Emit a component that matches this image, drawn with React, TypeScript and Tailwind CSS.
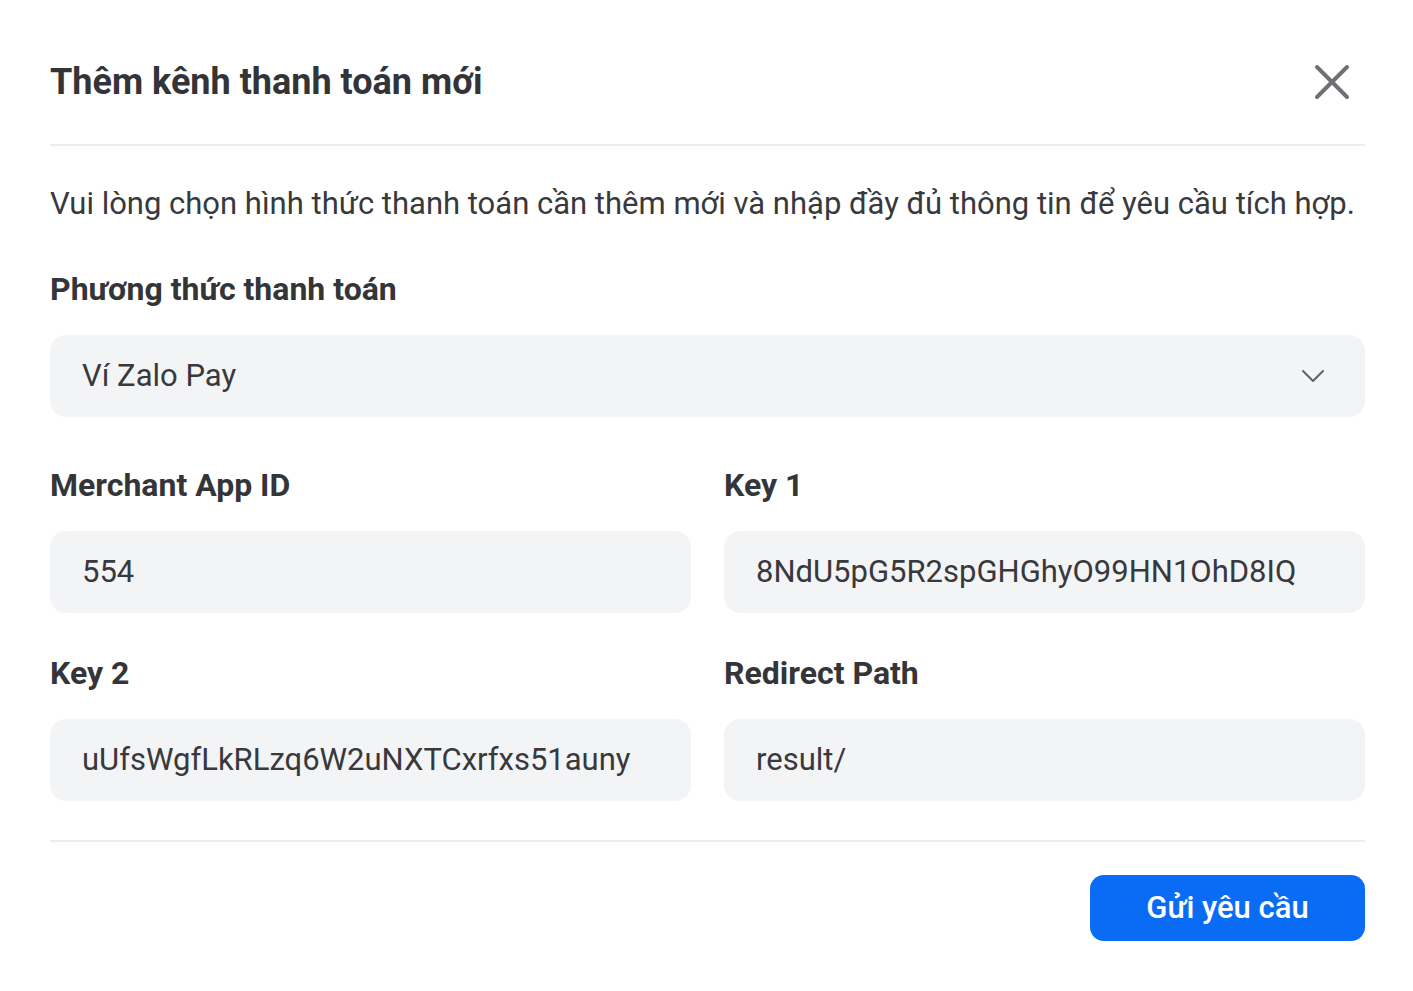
import React from "react";

const font = { fontFamily: "Roboto, 'Noto Sans', sans-serif" };

function Field({ label, value, className = "" }: { label: string; value: string; className?: string }) {
  return (
    <div className={className}>
      <div className="h-[40px] text-[32px] leading-[40px] font-bold text-[#343538]">{label}</div>
      <div className="mt-[26px] flex h-[82px] items-center rounded-[16px] bg-[#f3f4f6] px-[32px] text-[31px] text-[#38393c]">
        {value}
      </div>
    </div>
  );
}

export default function App() {
  return (
    <div className="min-h-[991px] w-[1413px] bg-white pl-[50px] pr-[48px]" style={font}>
      <div className="flex items-center justify-between border-b-2 border-[#ececec] pt-[62px] pb-[42px]">
        <h1 className="h-[40px] text-[36px] leading-[40px] font-bold text-[#333437]">Thêm kênh thanh toán mới</h1>
        <svg width="36" height="36" viewBox="0 0 36 36" className="mr-[15px]">
          <path d="M3 3 L33 33 M33 3 L3 33" stroke="#6e7073" strokeWidth="4" strokeLinecap="round" />
        </svg>
      </div>
      <p className="mt-[38px] h-[40px] text-[31px] leading-[40px] text-[#38393c]">
        Vui lòng chọn hình thức thanh toán cần thêm mới và nhập đầy đủ thông tin để yêu cầu tích hợp.
      </p>
      <div className="mt-[45px] h-[40px] text-[32px] leading-[40px] font-bold text-[#343538]">Phương thức thanh toán</div>
      <div className="mt-[26px] flex h-[82px] items-center justify-between rounded-[16px] bg-[#f3f4f6] pl-[32px] pr-[40px] text-[31px] text-[#38393c]">
        <span>Ví Zalo Pay</span>
        <svg width="24" height="14" viewBox="0 0 24 14">
          <path d="M2 2 L12 12 L22 2" stroke="#606266" strokeWidth="2" fill="none" strokeLinecap="round" strokeLinejoin="round" />
        </svg>
      </div>
      <div className="mt-[48px] grid grid-cols-2 gap-x-[33px] gap-y-[40px]">
        <Field label="Merchant App ID" value="554" />
        <Field label="Key 1" value="8NdU5pG5R2spGHGhyO99HN1OhD8IQ" />
        <Field label="Key 2" value="uUfsWgfLkRLzq6W2uNXTCxrfxs51auny" />
        <Field label="Redirect Path" value="result/" />
      </div>
      <div className="mt-[39px] border-t-2 border-[#ececec] pt-[33px] flex justify-end">
        <button className="flex h-[66px] w-[275px] items-center justify-center rounded-[14px] bg-[#0a6cf5] text-[31px] font-medium text-white">
          Gửi yêu cầu
        </button>
      </div>
    </div>
  );
}
